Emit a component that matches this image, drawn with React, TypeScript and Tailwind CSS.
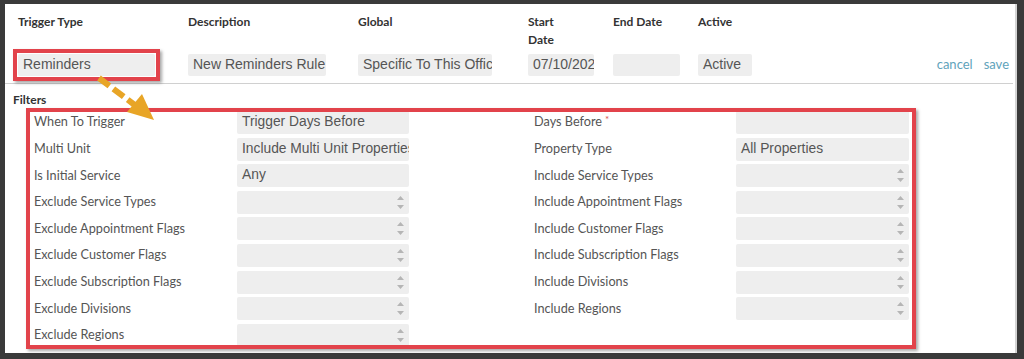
import React from 'react'

const leftRows = [
  { label: 'When To Trigger', value: 'Trigger Days Before' },
  { label: 'Multi Unit', value: 'Include Multi Unit Properties' },
  { label: 'Is Initial Service', value: 'Any' },
  { label: 'Exclude Service Types', multi: true },
  { label: 'Exclude Appointment Flags', multi: true },
  { label: 'Exclude Customer Flags', multi: true },
  { label: 'Exclude Subscription Flags', multi: true },
  { label: 'Exclude Divisions', multi: true },
  { label: 'Exclude Regions', multi: true },
]

const rightRows = [
  { label: 'Days Before', value: '', required: true },
  { label: 'Property Type', value: 'All Properties' },
  { label: 'Include Service Types', multi: true },
  { label: 'Include Appointment Flags', multi: true },
  { label: 'Include Customer Flags', multi: true },
  { label: 'Include Subscription Flags', multi: true },
  { label: 'Include Divisions', multi: true },
  { label: 'Include Regions', multi: true },
  null,
]

type Row = { label: string; value?: string; multi?: boolean; required?: boolean } | null

function Spinner() {
  return (
    <div className="flex flex-col gap-[5px] pr-[5px]">
      <svg width="7" height="4" viewBox="0 0 7 4"><polygon points="3.5,0 7,4 0,4" fill="#b5b5b5" /></svg>
      <svg width="7" height="4" viewBox="0 0 7 4"><polygon points="0,0 7,0 3.5,4" fill="#b5b5b5" /></svg>
    </div>
  )
}

function Field({ value, multi, width }: { value?: string; multi?: boolean; width: string }) {
  return (
    <div className={`${width} h-[23px] bg-[#eeeeee] rounded-[2px] flex items-center justify-between overflow-hidden`}>
      <span className="pl-[5px] text-[13.8px] text-[#555] whitespace-nowrap font-['Liberation_Sans',Arial,sans-serif]">{value}</span>
      {multi && <Spinner />}
    </div>
  )
}

function FilterCell({ row, labelW, inputW }: { row: Row; labelW: string; inputW: string }) {
  if (!row) return <div className={labelW} />
  return (
    <>
      <div className={`${labelW} text-[12.7px] text-[#555] whitespace-nowrap -mt-[1px]`}>
        {row.label}
        {row.required && <span className="text-[#d9534f] text-[10px] align-top ml-[3px]">*</span>}
      </div>
      <Field value={row.value} multi={row.multi} width={inputW} />
    </>
  )
}

function HeaderInput({ value, width }: { value: string; width: string }) {
  return (
    <div className={`${width} h-[22px] bg-[#eeeeee] rounded-[2px] flex items-center overflow-hidden`}>
      <span className="pl-[5px] text-[14px] text-[#555] whitespace-nowrap font-['Liberation_Sans',Arial,sans-serif]">{value}</span>
    </div>
  )
}

export default function App() {
  return (
    <div className="relative w-[1024px] h-[359px] bg-[#3a3a3a] pt-[4px] pl-[5px] pr-[7px] pb-[6px] font-['Lato','Open_Sans',sans-serif] overflow-hidden">
      <div className="h-full bg-white border-r-2 border-[#d4d4d4]">
        {/* header labels */}
        <div className="flex pl-[13px] pt-[9px] h-[45px] text-[12px] font-bold leading-[18px] text-[#333]">
          <div className="w-[170px]">Trigger Type</div>
          <div className="w-[170px]">Description</div>
          <div className="w-[170px]">Global</div>
          <div className="w-[85px]">Start<br />Date</div>
          <div className="w-[85px]">End Date</div>
          <div>Active</div>
        </div>

        {/* header inputs */}
        <div className="flex items-center pl-[13px] pr-[6px] h-[31px]">
          <div className="w-[170px]">
            <div className="-ml-[5px] w-[147px] h-[32px] border-4 border-[#e2434b] p-[1px] shadow-[2px_2px_3px_rgba(0,0,0,0.35)]">
              <HeaderInput value="Reminders" width="w-[137px]" />
            </div>
          </div>
          <div className="w-[170px]"><HeaderInput value="New Reminders Rule" width="w-[138px]" /></div>
          <div className="w-[170px]"><HeaderInput value="Specific To This Office" width="w-[134px]" /></div>
          <div className="w-[85px]"><HeaderInput value="07/10/2022" width="w-[66px]" /></div>
          <div className="w-[85px]"><HeaderInput value="" width="w-[67px]" /></div>
          <div className="flex-1"><HeaderInput value="Active" width="w-[54px]" /></div>
          <div className="flex gap-[11px] text-[13px] text-[#5fa3bb]">
            <span>cancel</span>
            <span>save</span>
          </div>
        </div>

        <div className="mt-[3px] mr-[2px] h-px bg-[#d0d0d0]" />

        <div className="mt-[8px] ml-[8px] text-[12px] font-bold leading-[16px] text-[#333]">Filters</div>

        {/* filters */}
        <div className="ml-[21px] w-[890px] h-[241px] border-4 border-[#e2434b] shadow-[2px_2px_3px_rgba(0,0,0,0.35)] overflow-hidden pl-[4px]">
          <div className="-mt-[1px] flex flex-col gap-[3.6px]">
            {leftRows.map((l, i) => (
              <div key={i} className="flex items-center h-[23px]">
                <FilterCell row={l} labelW="w-[203px]" inputW="w-[172px]" />
                <div className="w-[125px]" />
                <FilterCell row={rightRows[i]} labelW="w-[202px]" inputW="w-[173px]" />
              </div>
            ))}
          </div>
        </div>
      </div>

      {/* annotation arrow */}
      <svg className="absolute left-0 top-0 pointer-events-none" width="200" height="140" viewBox="0 0 200 140">
        <line x1="99" y1="78" x2="136" y2="106" stroke="#e8a526" strokeWidth="6" strokeDasharray="13 5" />
        <polygon points="154,120 127,112 142,94" fill="#e8a526" />
      </svg>
    </div>
  )
}
